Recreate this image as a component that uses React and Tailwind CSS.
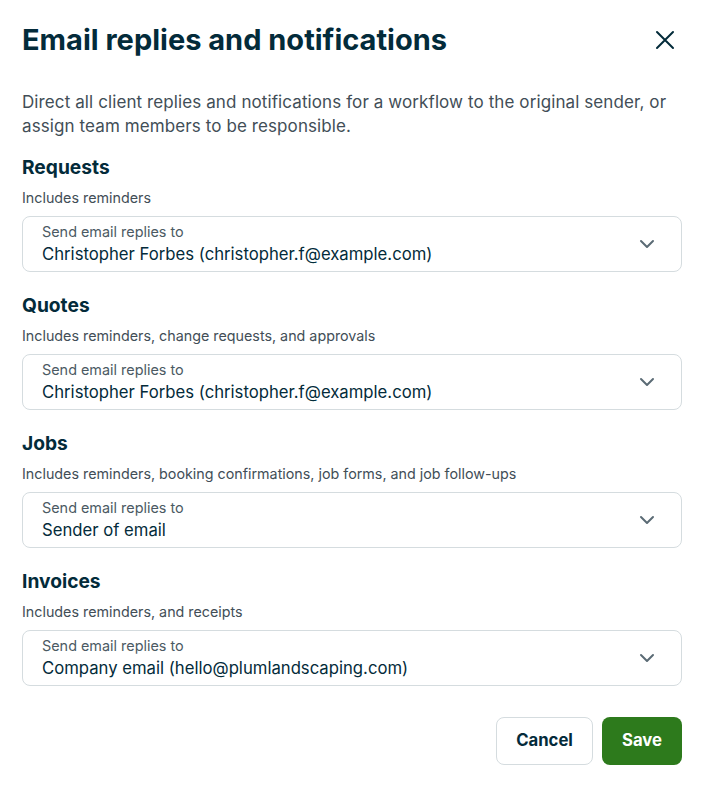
import { ChevronDown } from 'lucide-react'

const sections = [
  { title: 'Requests', desc: 'Includes reminders', value: 'Christopher Forbes (christopher.f@example.com)' },
  { title: 'Quotes', desc: 'Includes reminders, change requests, and approvals', value: 'Christopher Forbes (christopher.f@example.com)' },
  { title: 'Jobs', desc: 'Includes reminders, booking confirmations, job forms, and job follow-ups', value: 'Sender of email' },
  { title: 'Invoices', desc: 'Includes reminders, and receipts', value: 'Company email (hello@plumlandscaping.com)' },
]

export default function App() {
  return (
    <div className="w-[706px] h-[788px] bg-white pl-[22px] pr-[24px] pt-[22px] text-[#032b3a]" style={{ fontFamily: 'Inter, sans-serif' }}>
      {/* Header */}
      <div className="flex items-center justify-between h-9">
        <h1 className="text-[29px] leading-9 font-bold">Email replies and notifications</h1>
        <button className="mr-[5px] text-[#032b3a]">
          <svg width="24" height="24" viewBox="0 0 24 24" fill="none" stroke="currentColor" strokeWidth="2" strokeLinecap="round">
            <path d="M4 4l16 16M20 4L4 20" />
          </svg>
        </button>
      </div>

      <p className="mt-8 text-[17px] tracking-[0.1px] leading-6 text-[#424e57]">
        Direct all client replies and notifications for a workflow to the original sender, or assign team members to be responsible.
      </p>

      <div className="mt-[17px] flex flex-col gap-[21px]">
        {sections.map((s) => (
          <div key={s.title}>
            <h2 className="text-[19.2px] leading-6 font-bold">{s.title}</h2>
            <p className="mt-[9px] text-[14.3px] leading-5 text-[#424e57]">{s.desc}</p>
            <div className="mt-2 h-14 border border-[#d5dcdf] rounded-lg flex items-center justify-between pl-[19px] pr-[22px]">
              <div className="flex flex-col">
                <span className="text-[14.4px] leading-5 text-[#4b5a63]">Send email replies to</span>
                <span className="text-[16.7px] leading-6 text-[#032b3a]">{s.value}</span>
              </div>
              <ChevronDown className="w-6 h-6 text-[#5b6b75]" strokeWidth={2} />
            </div>
          </div>
        ))}
      </div>

      <div className="mt-[31px] flex justify-end gap-[9px]">
        <button className="h-12 w-[97px] rounded-lg border border-[#d5dcdf] bg-white text-[16.7px] font-bold text-[#032b3a]">Cancel</button>
        <button className="h-12 w-20 rounded-lg bg-[#2d7a1c] text-[16.7px] font-bold text-white">Save</button>
      </div>
    </div>
  )
}
